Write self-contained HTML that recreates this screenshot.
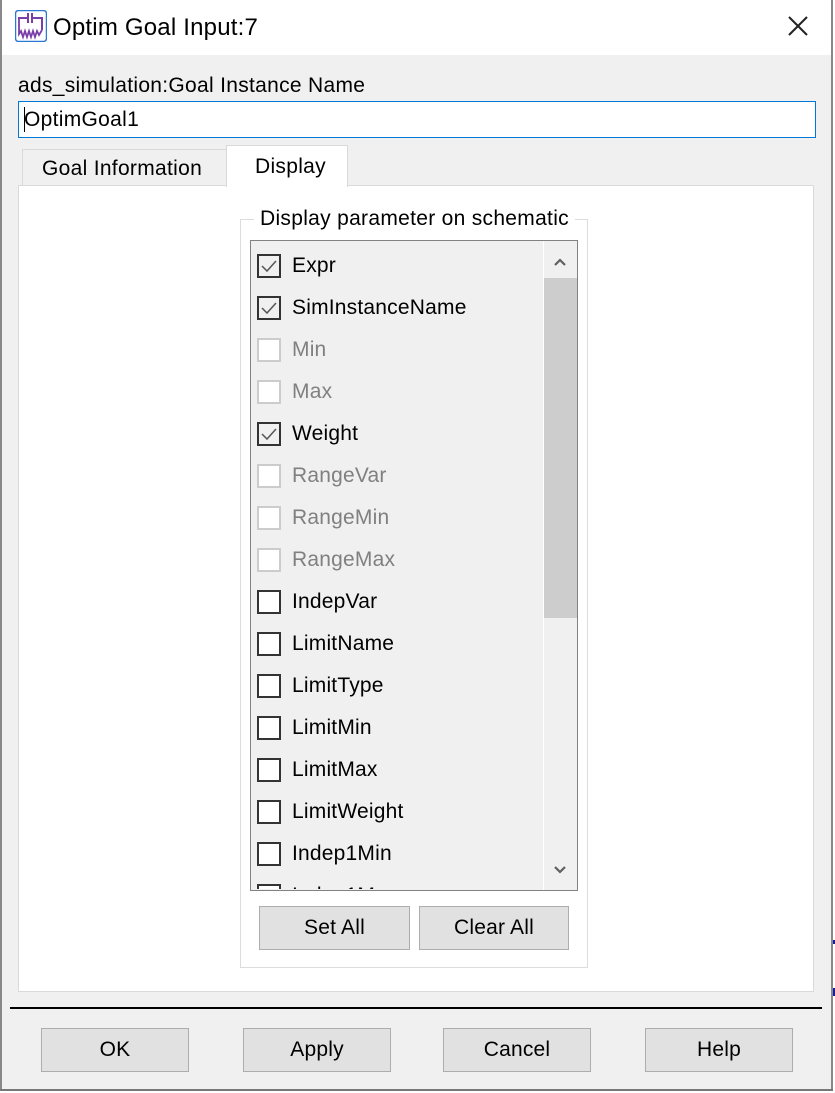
<!DOCTYPE html>
<html><head><meta charset="utf-8"><style>
*{box-sizing:border-box;margin:0;padding:0}
body{width:835px;height:1093px;background:#fff;position:relative;overflow:hidden;font-family:"Liberation Sans",sans-serif;color:#000}
.dlg{position:absolute;left:0;top:0;width:833px;height:1091px;background:#f0f0f0}
.title{position:absolute;left:0;top:0;width:831px;height:55px;background:#fff}
.abs{position:absolute}
.t{font-size:21px;letter-spacing:0.3px;white-space:nowrap}
.btn{position:absolute;background:#e1e1e1;border:1px solid #adadad;font-size:21px;letter-spacing:0.2px;text-align:center;line-height:42px}
.cb{position:absolute;left:257px;width:24px;height:24px;border:2px solid #333;background:#fff}
.cb.c{background:#f0f0f0}
.cb.d{border-color:#ccc}
.lbl{position:absolute;left:292px;font-size:21px;letter-spacing:0.2px;line-height:24px;white-space:nowrap}
.lbl.d{color:#808080}
</style></head><body>
<div class="dlg">
<div class="title">
<svg class="abs" style="left:15px;top:10px" width="32" height="32" viewBox="0 0 32 32">
<rect x="0.5" y="0.5" width="31" height="31" rx="3" fill="#fff" stroke="#2a7ad5" stroke-width="1.5"/>
<path d="M3 8H13M13 3V13M17 3V13M17 8H27V20" fill="none" stroke="#7a3ea8" stroke-width="2"/>
<path d="M4 8V24L6 21L8 27L10 21L12 27L14 21L16 27L18 21L20 27L22 21L24 25L27 20" fill="none" stroke="#7a3ea8" stroke-width="1.8"/>
</svg>
<div class="abs t" style="left:53px;top:14px;font-size:24px;letter-spacing:0.2px">Optim Goal Input:7</div>
<svg class="abs" style="left:787px;top:15px" width="22" height="22" viewBox="0 0 22 22"><path d="M2 2L20 20M20 2L2 20" stroke="#222" stroke-width="2"/></svg>
</div>
<div class="abs t" style="left:18px;top:74px">ads_simulation:Goal Instance Name</div>
<div class="abs" style="left:18px;top:101px;width:798px;height:37px;background:#fff;border:1px solid #0078d7"></div>
<div class="abs" style="left:24px;top:107px;width:1px;height:25px;background:#000"></div>
<div class="abs t" style="left:24px;top:108px">OptimGoal1</div>
<div class="abs" style="left:22px;top:149px;width:205px;height:37px;background:#f0f0f0;border:1px solid #d9d9d9"></div>
<div class="abs t" style="left:42px;top:157px">Goal Information</div>
<div class="abs" style="left:18px;top:185px;width:796px;height:807px;background:#fff;border:1px solid #d9d9d9"></div>
<div class="abs" style="left:226px;top:145px;width:122px;height:42px;background:#fff;border:1px solid #d9d9d9;border-bottom:none"></div>
<div class="abs t" style="left:255px;top:155px">Display</div>
<div class="abs" style="left:240px;top:219px;width:348px;height:749px;border:1px solid #dcdcdc"></div>
<div class="abs t" style="left:254px;top:207px;background:#fff;padding:0 6px">Display parameter on schematic</div>
<div class="abs" style="left:250px;top:240px;width:328px;height:651px;background:#f0f0f0;border:1px solid #828282;overflow:hidden">
 <div class="abs" style="left:292px;top:0;width:34px;height:650px;background:#f0f0f0;border-left:1px solid #fff"></div>
 <div class="abs" style="left:293px;top:37px;width:33px;height:340px;background:#cdcdcd"></div>
 <svg class="abs" style="left:302px;top:16px" width="14" height="10" viewBox="0 0 14 10"><path d="M2 8L7 3L12 8" fill="none" stroke="#606060" stroke-width="2.2"/></svg>
 <svg class="abs" style="left:302px;top:624px" width="14" height="10" viewBox="0 0 14 10"><path d="M2 2L7 7L12 2" fill="none" stroke="#606060" stroke-width="2.2"/></svg>
</div>
<div class="abs" style="left:0;top:0;width:835px;height:889px;overflow:hidden">
<div class="cb c" style="top:254px"></div><div class="lbl" style="top:254px">Expr</div>
<div class="cb c" style="top:296px"></div><div class="lbl" style="top:296px">SimInstanceName</div>
<div class="cb d" style="top:338px"></div><div class="lbl d" style="top:338px">Min</div>
<div class="cb d" style="top:380px"></div><div class="lbl d" style="top:380px">Max</div>
<div class="cb c" style="top:422px"></div><div class="lbl" style="top:422px">Weight</div>
<div class="cb d" style="top:464px"></div><div class="lbl d" style="top:464px">RangeVar</div>
<div class="cb d" style="top:506px"></div><div class="lbl d" style="top:506px">RangeMin</div>
<div class="cb d" style="top:548px"></div><div class="lbl d" style="top:548px">RangeMax</div>
<div class="cb" style="top:590px"></div><div class="lbl" style="top:590px">IndepVar</div>
<div class="cb" style="top:632px"></div><div class="lbl" style="top:632px">LimitName</div>
<div class="cb" style="top:674px"></div><div class="lbl" style="top:674px">LimitType</div>
<div class="cb" style="top:716px"></div><div class="lbl" style="top:716px">LimitMin</div>
<div class="cb" style="top:758px"></div><div class="lbl" style="top:758px">LimitMax</div>
<div class="cb" style="top:800px"></div><div class="lbl" style="top:800px">LimitWeight</div>
<div class="cb" style="top:842px"></div><div class="lbl" style="top:842px">Indep1Min</div>
<div class="cb" style="top:884px"></div><div class="lbl" style="top:884px">Indep1Max</div>
<svg class="abs" style="left:259px;top:256px" width="20" height="20" viewBox="0 0 20 20"><path d="M3 10L8 15L17 5" fill="none" stroke="#555" stroke-width="1.5"/></svg>
<svg class="abs" style="left:259px;top:298px" width="20" height="20" viewBox="0 0 20 20"><path d="M3 10L8 15L17 5" fill="none" stroke="#555" stroke-width="1.5"/></svg>
<svg class="abs" style="left:259px;top:424px" width="20" height="20" viewBox="0 0 20 20"><path d="M3 10L8 15L17 5" fill="none" stroke="#555" stroke-width="1.5"/></svg>
</div>
<div class="btn" style="left:259px;top:906px;width:151px;height:44px">Set All</div>
<div class="btn" style="left:419px;top:906px;width:150px;height:44px">Clear All</div>
<div class="abs" style="left:10px;top:1007px;width:812px;height:2px;background:#000"></div>
<div class="btn" style="left:41px;top:1028px;width:148px;height:44px">OK</div>
<div class="btn" style="left:243px;top:1028px;width:148px;height:44px">Apply</div>
<div class="btn" style="left:443px;top:1028px;width:148px;height:44px">Cancel</div>
<div class="btn" style="left:645px;top:1028px;width:148px;height:44px">Help</div>
<div class="abs" style="left:0;top:0;width:2px;height:1091px;background:#888"></div>
<div class="abs" style="left:831px;top:0;width:2px;height:1091px;background:#888"></div>
<div class="abs" style="left:0;top:1089px;width:833px;height:2px;background:#777"></div>
</div>
<div class="abs" style="left:833px;top:940px;width:2px;height:4px;background:#1a1aa0"></div>
<div class="abs" style="left:833px;top:988px;width:2px;height:8px;background:#1a1aa0"></div>
</body></html>
